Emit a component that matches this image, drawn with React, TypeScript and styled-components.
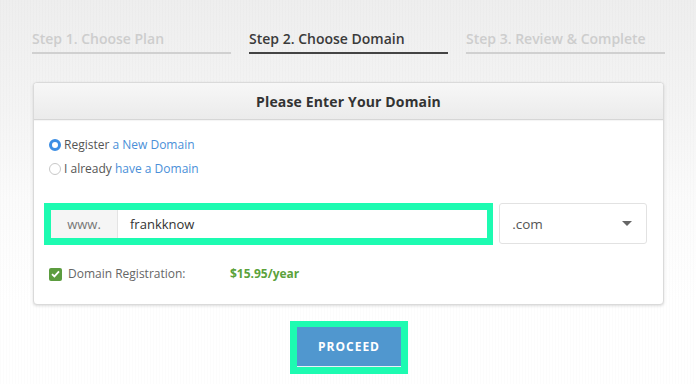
import React from "react";
import styled, { createGlobalStyle } from "styled-components";

const Global = createGlobalStyle`
  html, body { margin: 0; padding: 0; }
  body {
    width: 696px;
    height: 384px;
    overflow: hidden;
    font-family: "Open Sans", "Liberation Sans", sans-serif;
    background:
      repeating-linear-gradient(90deg, rgba(0,0,0,0.012) 0 1px, rgba(255,255,255,0.02) 1px 3px),
      linear-gradient(180deg, #eeeeee 0px, #f4f4f4 110px, #fbfbfb 200px, #ffffff 300px);
  }
`;

const Page = styled.div`
  width: 696px;
  height: 384px;
  display: flex;
  flex-direction: column;
`;

const Steps = styled.div`
  display: grid;
  grid-template-columns: repeat(3, 199px);
  column-gap: 18px;
  padding: 29px 0 0 32px;
`;

const Step = styled.div<{ $active?: boolean }>`
  font-size: 14px;
  font-weight: 600;
  line-height: 20px;
  padding-bottom: 3px;
  color: ${(p) => (p.$active ? "#3a3a3a" : "#cdcdcd")};
  border-bottom: 2px solid ${(p) => (p.$active ? "#444" : "#d0d0d0")};
  white-space: nowrap;
`;

const Card = styled.div`
  margin: 28px 32px 0 33px;
  background: #fff;
  border: 1px solid #dadada;
  border-radius: 4px;
  box-shadow: 0 1px 3px rgba(0, 0, 0, 0.14);
  overflow: hidden;
`;

const CardHeader = styled.div`
  height: 36px;
  display: flex;
  align-items: center;
  justify-content: center;
  background: linear-gradient(180deg, #f7f7f7 0%, #ebebeb 100%);
  border-bottom: 1px solid #d6d6d6;
  box-shadow: 0 1px 1px rgba(0,0,0,0.04);
  font-family: "Open Sans", "Liberation Sans", sans-serif;
  font-weight: 700;
  font-size: 14px;
  letter-spacing: 0.15px;
  color: #333;
`;

const CardBody = styled.div`
  padding: 15px 16px 20px 10px;
  display: flex;
  flex-direction: column;
`;

const RadioGroup = styled.div`
  display: flex;
  flex-direction: column;
  gap: 4px;
  padding-left: 5px;
`;

const RadioRow = styled.label`
  display: flex;
  align-items: center;
  gap: 3px;
  font-size: 12px;
  line-height: 20px;
  color: #555;
`;

const RadioText = styled.span`
  white-space: pre;
`;

const RadioDot = styled.span<{ $checked?: boolean }>`
  width: 12px;
  height: 12px;
  box-sizing: border-box;
  border-radius: 50%;
  border: ${(p) => (p.$checked ? "3.5px solid #3d8ee4" : "1px solid #c8c8c8")};
  background: #fff;
  flex: none;
`;

const Link = styled.span`
  color: #4a8fd8;
`;

const InputRow = styled.div`
  display: flex;
  align-items: flex-start;
  gap: 6px;
  margin-top: 24px;
`;

const Highlight = styled.div`
  width: 450px;
  height: 42px;
  box-sizing: border-box;
  border: 7px solid #1dfbb1;
  border-right-width: 6px;
  display: flex;
  background: #fff;
`;

const Addon = styled.div`
  width: 66px;
  display: flex;
  align-items: center;
  justify-content: center;
  background: #f5f5f5;
  border-right: 1px solid #e4e4e4;
  color: #777;
  font-size: 13px;
`;

const DomainInput = styled.div`
  flex: 1;
  display: flex;
  align-items: center;
  padding-left: 12px;
  font-size: 13px;
  color: #333;
`;

const Select = styled.div`
  width: 148px;
  height: 41px;
  box-sizing: border-box;
  border: 1px solid #e2e2e2;
  border-radius: 3px;
  display: flex;
  align-items: center;
  justify-content: space-between;
  padding: 0 14px 0 12px;
  font-size: 13.5px;
  color: #555;
`;

const Caret = styled.span`
  width: 0;
  height: 0;
  border-left: 5px solid transparent;
  border-right: 5px solid transparent;
  border-top: 5px solid #666;
`;

const CheckRow = styled.div`
  display: flex;
  align-items: center;
  margin-top: 19px;
  padding-left: 5px;
  font-size: 12px;
  line-height: 20px;
`;

const CheckBox = styled.span`
  width: 13px;
  height: 13px;
  border-radius: 2px;
  background: #5c9c3f;
  display: flex;
  align-items: center;
  justify-content: center;
  flex: none;
`;

const CheckLabel = styled.span`
  width: 162px;
  margin-left: 6px;
  color: #666;
`;

const Price = styled.span`
  font-weight: 700;
  color: #5ba23b;
`;

const ButtonWrap = styled.div`
  display: flex;
  justify-content: center;
  margin-top: 16px;
  padding-left: 2px;
`;

const ButtonFrame = styled.div`
  border: 7px solid #1dfbb1;
  border-top-width: 6px;
`;

const Button = styled.button`
  width: 104px;
  height: 40px;
  border: none;
  border-bottom: 1px solid #e8f1f8;
  background: #5097cf;
  color: #fff;
  font-family: "Open Sans", "Liberation Sans", sans-serif;
  font-weight: 700;
  font-size: 12px;
  letter-spacing: 1px;
  display: block;
  padding: 0;
`;

export default function App() {
  return (
    <Page>
      <Global />
      <Steps>
        <Step>Step 1. Choose Plan</Step>
        <Step $active>Step 2. Choose Domain</Step>
        <Step>Step 3. Review &amp; Complete</Step>
      </Steps>
      <Card>
        <CardHeader>Please Enter Your Domain</CardHeader>
        <CardBody>
          <RadioGroup>
            <RadioRow>
              <RadioDot $checked />
              <RadioText>
                Register <Link>a New Domain</Link>
              </RadioText>
            </RadioRow>
            <RadioRow>
              <RadioDot />
              <RadioText>
                I already <Link>have a Domain</Link>
              </RadioText>
            </RadioRow>
          </RadioGroup>
          <InputRow>
            <Highlight>
              <Addon>www.</Addon>
              <DomainInput>frankknow</DomainInput>
            </Highlight>
            <Select>
              .com
              <Caret />
            </Select>
          </InputRow>
          <CheckRow>
            <CheckBox>
              <svg width="9" height="8" viewBox="0 0 9 8">
                <path d="M1 4.2 L3.4 6.4 L8 1.4" fill="none" stroke="#fff" strokeWidth="1.8" />
              </svg>
            </CheckBox>
            <CheckLabel>Domain Registration:</CheckLabel>
            <Price>$15.95/year</Price>
          </CheckRow>
        </CardBody>
      </Card>
      <ButtonWrap>
        <ButtonFrame>
          <Button>PROCEED</Button>
        </ButtonFrame>
      </ButtonWrap>
    </Page>
  );
}
